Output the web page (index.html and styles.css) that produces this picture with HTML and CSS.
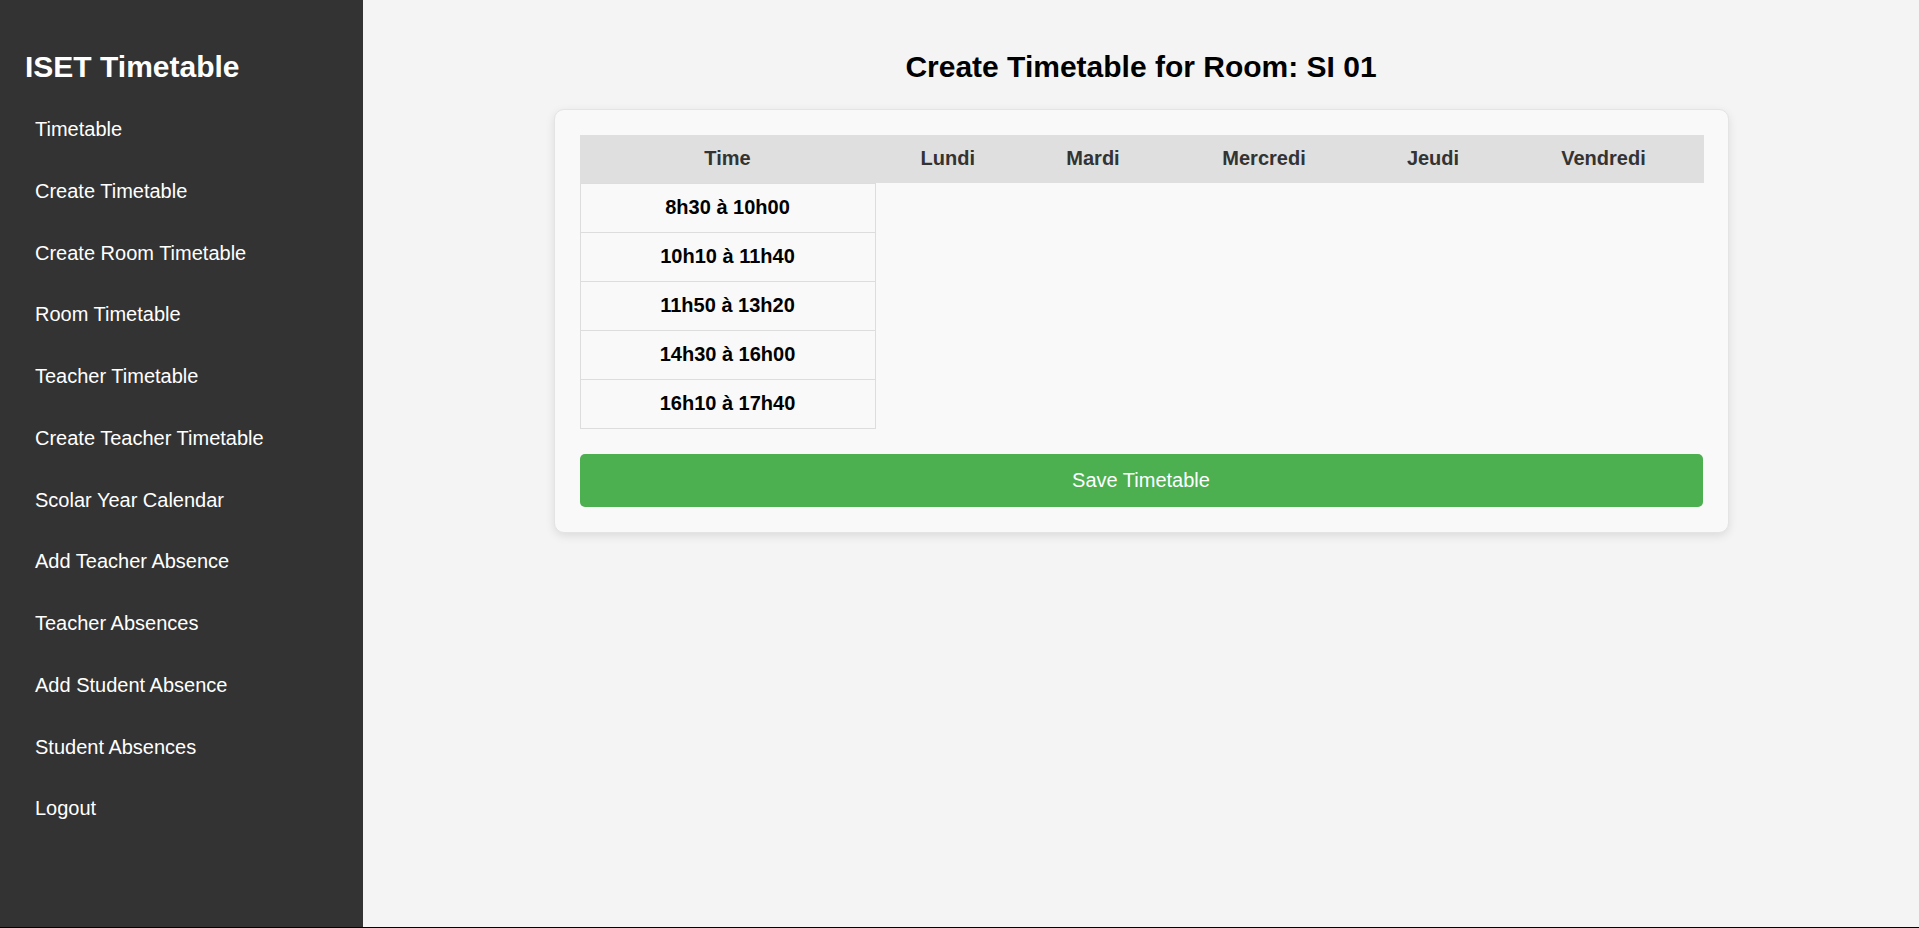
FILE: index.html
```html
<!DOCTYPE html>
<html lang="en">
<head>
<meta charset="utf-8">
<title>Create Room Timetable</title>
<link rel="stylesheet" href="styles.css">
</head>
<body>
<div class="layout">
  <aside class="sidebar">
    <h2 class="brand">ISET Timetable</h2>
    <ul class="nav">
      <li><a href="#">Timetable</a></li>
      <li><a href="#">Create Timetable</a></li>
      <li><a href="#">Create Room Timetable</a></li>
      <li><a href="#">Room Timetable</a></li>
      <li><a href="#">Teacher Timetable</a></li>
      <li><a href="#">Create Teacher Timetable</a></li>
      <li><a href="#">Scolar Year Calendar</a></li>
      <li><a href="#">Add Teacher Absence</a></li>
      <li><a href="#">Teacher Absences</a></li>
      <li><a href="#">Add Student Absence</a></li>
      <li><a href="#">Student Absences</a></li>
      <li><a href="#">Logout</a></li>
    </ul>
  </aside>
  <main class="main">
    <h2 class="page-title">Create Timetable for Room: SI 01</h2>
    <div class="card">
      <table class="timetable">
        <colgroup>
          <col class="c-time">
          <col class="c-lundi">
          <col class="c-mardi">
          <col class="c-mercredi">
          <col class="c-jeudi">
          <col class="c-vendredi">
        </colgroup>
        <thead>
          <tr>
            <th>Time</th>
            <th>Lundi</th>
            <th>Mardi</th>
            <th>Mercredi</th>
            <th>Jeudi</th>
            <th>Vendredi</th>
          </tr>
        </thead>
        <tbody>
          <tr><td class="time">8h30 à 10h00</td><td class="slot"></td><td class="slot"></td><td class="slot"></td><td class="slot"></td><td class="slot"></td></tr>
          <tr><td class="time">10h10 à 11h40</td><td class="slot"></td><td class="slot"></td><td class="slot"></td><td class="slot"></td><td class="slot"></td></tr>
          <tr><td class="time">11h50 à 13h20</td><td class="slot"></td><td class="slot"></td><td class="slot"></td><td class="slot"></td><td class="slot"></td></tr>
          <tr><td class="time">14h30 à 16h00</td><td class="slot"></td><td class="slot"></td><td class="slot"></td><td class="slot"></td><td class="slot"></td></tr>
          <tr><td class="time">16h10 à 17h40</td><td class="slot"></td><td class="slot"></td><td class="slot"></td><td class="slot"></td><td class="slot"></td></tr>
        </tbody>
      </table>
      <button class="save-btn" type="button">Save Timetable</button>
    </div>
  </main>
</div>
</body>
</html>
```

FILE: styles.css
```css
html, body {
  margin: 0;
  padding: 0;
  background: #000;
}

body {
  font-family: "Liberation Sans", Arial, sans-serif;
}

.layout {
  display: flex;
  height: 927px;
}

.sidebar {
  width: 363px;
  box-sizing: border-box;
  background: #333;
  color: #fff;
  padding: 25px;
  flex-shrink: 0;
}

.brand {
  font-size: 30px;
  font-weight: bold;
  margin: 25px 0 21.5px 0;
  line-height: 33.5px;
}

.nav {
  list-style: none;
  margin: 0;
  padding: 0;
}

.nav li {
  margin-bottom: 12.78px;
}

.nav a {
  display: block;
  padding: 13px 10px;
  font-size: 20px;
  line-height: 23px;
  color: #fff;
  text-decoration: none;
}

.main {
  flex: 1;
  background: #f4f4f4;
  padding: 25px;
  box-sizing: border-box;
}

.page-title {
  font-size: 30px;
  font-weight: bold;
  text-align: center;
  color: #000;
  line-height: 33.5px;
  margin: 24.5px 0 25.5px 0;
}

.card {
  max-width: 1175px;
  box-sizing: border-box;
  margin: 0 auto;
  background: #f9f9f9;
  border: 1px solid #e4e4e4;
  border-radius: 10px;
  padding: 25px;
  box-shadow: 0 3px 10px rgba(0, 0, 0, 0.1);
}

.timetable {
  width: 100%;
  table-layout: fixed;
  border-collapse: collapse;
}

.c-time { width: 295px; }
.c-lundi { width: 146px; }
.c-mardi { width: 144px; }
.c-mercredi { width: 198px; }
.c-jeudi { width: 140px; }
.c-vendredi { width: 201px; }

.timetable th {
  background: #dfdfdf;
  color: #333;
  font-size: 20px;
  font-weight: bold;
  line-height: 23px;
  padding: 12.5px 12px;
  text-align: center;
}

.timetable td {
  font-size: 20px;
  line-height: 23px;
  padding: 12.5px 12px;
  text-align: center;
}

.timetable td.time {
  font-weight: bold;
  color: #000;
  border: 1px solid #ddd;
}

.save-btn {
  display: block;
  width: 100%;
  margin-top: 25px;
  padding: 15px;
  background: #4caf50;
  color: #fff;
  border: none;
  border-radius: 5px;
  font-family: "Liberation Sans", Arial, sans-serif;
  font-size: 20px;
  line-height: 23px;
  cursor: pointer;
}
```
